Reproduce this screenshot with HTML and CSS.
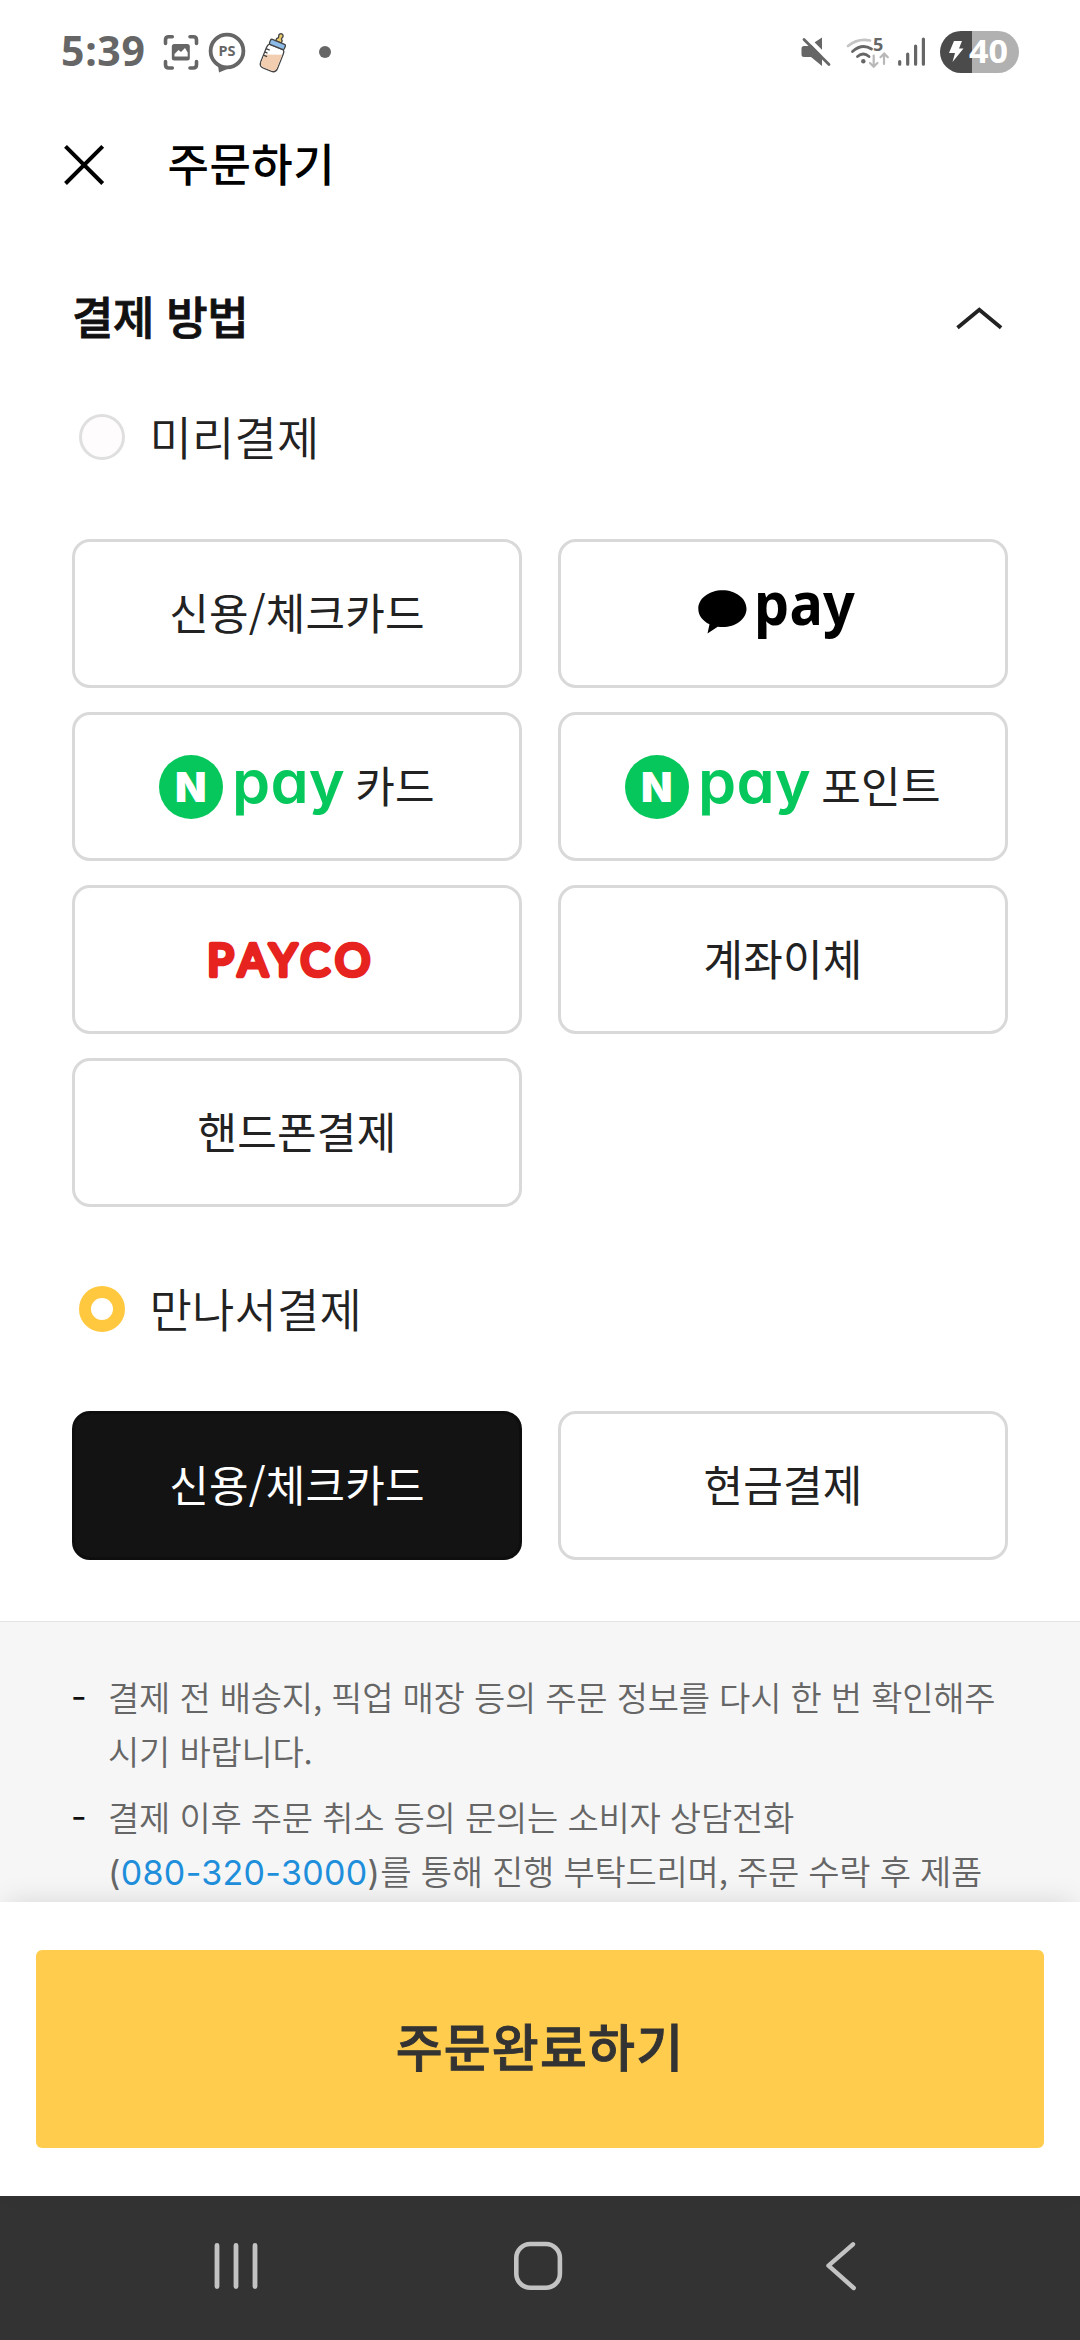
FILE: index.html
```
<!DOCTYPE html>
<html lang="ko">
<head>
<meta charset="utf-8">
<title>주문하기</title>
<link rel="stylesheet" href="styles.css">
</head>
<body>
<div class="screen">
  <div class="statusbar">
    <div class="status-left">
      <span class="clock">5:39</span>
      <svg class="ic-capture" width="36" height="42" viewBox="162.500 31 36 42" fill="none" stroke="#666" stroke-width="3.600" stroke-linecap="round">
        <path d="M165 43.500V40q0-3.200 3.200-3.200h3.600M189.500 36.800h3.300q3.200 0 3.200 3.200v3.500M165 61.500v3.300q0 3.200 3.200 3.200h3.600M189.500 68h3.300q3.200 0 3.200-3.200v-3.300"/>
        <rect x="171.300" y="44" width="18" height="16.500" rx="2.500" fill="#666" stroke="none"/>
        <path d="M174 56.500v-2.500l4-4 2.500 2 4-4 2.700 4.500v4z" fill="#fff" stroke="none"/>
      </svg>
      <svg class="ic-bubble" width="40" height="42" viewBox="207 31 40 42">
        <path d="M217.500 62 219 72.500 232 67z" fill="#666"/>
        <circle cx="227" cy="51" r="16.400" fill="#fff" stroke="#666" stroke-width="3.800"/>
        <text x="218.400" y="56.200" class="ps" textLength="17" lengthAdjust="spacingAndGlyphs">PS</text>
      </svg>
      <svg class="ic-bottle" width="34" height="42" viewBox="257 31 34 42" stroke="#444" stroke-width="1.300" stroke-linejoin="round">
        <g transform="rotate(22 274 53)">
          <path d="M271 41v-2.500q2-1 1-3a2.200 2.200 0 1 1 4 0q-1 2 1 3V41z" fill="#e8c86a"/>
          <path d="M266.500 46.500q-1.500 1.500-1.500 4V66q0 5 5 5h8q5 0 5-5V50.500q0-2.500-1.500-4z" fill="#fff"/>
          <path d="M265.700 58l16.600-6.500V66q0 4.300-4.300 4.300h-8q-4.300 0-4.300-4.300z" fill="#f2cdb0" stroke="none"/>
          <rect x="266" y="41" width="16" height="5.500" rx="1.500" fill="#8dbbe8"/>
          <path d="M265 52h4M265 55.500h3M265 59h4" fill="none"/>
        </g>
      </svg>
      <span class="dot"></span>
    </div>
    <div class="status-right">
      <svg class="ic-mute" width="34" height="42" viewBox="799 31 34 42">
        <path d="M804 46h5l13-8.500V66L811 57h-7q-2.500 0-2.500-2.500v-6q0-2.500 2.500-2.500z" fill="#666"/>
        <path d="M806 36.500l26 26.500" stroke="#fff" stroke-width="4"/>
        <path d="M804 39.500l25 25" stroke="#666" stroke-width="2.800" stroke-linecap="round"/>
      </svg>
      <svg class="ic-wifi" width="43" height="42" viewBox="846 31 43 42" fill="none" stroke-linecap="round" stroke-width="2.800">
        <path d="M848 46q10-8 22-5.500" stroke="#c4c4c4"/>
        <path d="M852.500 51.500q9.500-8.500 19-2.500M857.500 56.500q5.800-5 11.500 0" stroke="#666"/>
        <circle cx="863.300" cy="61.300" r="2.200" fill="#666"/>
        <path d="M873.700 55.500v11M870 63l3.700 3.700 3.700-3.700M884 64V54M880.500 57.200l3.700-3.700 3.600 3.700" stroke="#b8b8b8" stroke-width="2.200"/>
        <text x="873" y="51.200" class="wifi5">5</text>
      </svg>
      <svg class="ic-signal" width="28" height="42" viewBox="898 31 28 42" stroke="#666" stroke-width="3.200" stroke-linecap="round">
        <path d="M899.700 61.500v2.700M907.700 54v10.200M915.600 46v18.200M923.400 39v25.200"/>
      </svg>
      <svg class="ic-battery" width="79" height="42" viewBox="940 31 79 42">
        <path d="M972 31h26a21 21 0 0 1 0 42h-26z" fill="#b1b1b1"/>
        <path d="M972 31h-11a21 21 0 0 0 0 42h11z" fill="#4b4b4b"/>
        <path d="M954 41h8l-3 7.500h4.500L952.500 62l2.500-9h-6z" fill="#fff"/>
        <text x="969" y="62.500" class="batt" textLength="39" lengthAdjust="spacingAndGlyphs">40</text>
      </svg>
    </div>
  </div>

  <header class="appbar">
    <svg width="40" height="40" viewBox="64 145 40 40" stroke="#000" stroke-width="4"><path d="M65.500 146.300l37.200 37.200M102.700 146.300l-37.200 37.200"/></svg>
    <h1>주문하기</h1>
  </header>

  <section class="payment">
    <div class="section-head">
      <h2>결제 방법</h2>
      <svg width="50" height="24" viewBox="954 305 50 24" fill="none" stroke="#222" stroke-width="3.800"><path d="M957.500 326.800l21.800-18 21.800 18"/></svg>
    </div>

    <label class="radio"><span class="ring"></span><span class="radio-text">미리결제</span></label>
    <div class="grid prepaid">
      <button class="opt">신용/체크카드</button>
      <button class="opt">
        <svg class="kakao" width="160" height="52" viewBox="698 588 160 52">
          <path d="M722.500 590.300c13.300 0 24 8.200 24 18.400s-10.700 18.400-24 18.400q-2.500 0-4.800-.4L707.500 633.500l2-9.300c-7-3.300-11.200-9-11.200-15.500 0-10.200 10.900-18.400 24.200-18.400z"/>
          <text x="754" y="624.500" class="kakao-text" textLength="101" lengthAdjust="spacingAndGlyphs">pay</text>
        </svg>
      </button>
      <button class="opt npay">
        <svg width="186" height="64" viewBox="159 755 186 64"><circle cx="191" cy="787" r="32" fill="#06c75b"/><text x="191" y="802" class="n">N</text><text x="232" y="802.500" class="n-pay" textLength="113" lengthAdjust="spacingAndGlyphs">pay</text></svg>
        <span>카드</span>
      </button>
      <button class="opt npay">
        <svg width="186" height="64" viewBox="159 755 186 64"><circle cx="191" cy="787" r="32" fill="#06c75b"/><text x="191" y="802" class="n">N</text><text x="232" y="802.500" class="n-pay" textLength="113" lengthAdjust="spacingAndGlyphs">pay</text></svg>
        <span>포인트</span>
      </button>
      <button class="opt"><svg class="payco" width="170" height="46" viewBox="206 937 170 46"><text y="975.800" x="207.300 238 269.500 300.500 335">PAYCO</text></svg></button>
      <button class="opt">계좌이체</button>
      <button class="opt">핸드폰결제</button>
    </div>

    <label class="radio"><span class="ring on"></span><span class="radio-text">만나서결제</span></label>
    <div class="grid">
      <button class="opt selected">신용/체크카드</button>
      <button class="opt">현금결제</button>
    </div>
  </section>

  <ul class="notes">
    <li>결제 전 배송지, 픽업 매장 등의 주문 정보를 다시 한 번 확인해주<br>시기 바랍니다.</li>
    <li>결제 이후 주문 취소 등의 문의는 소비자 상담전화<br><span class="num">(<a>080-320-3000</a>)</span>를 통해 진행 부탁드리며, 주문 수락 후 제품</li>
  </ul>

  <div class="cta-bar"><button class="cta">주문완료하기</button></div>

  <nav class="navbar">
    <svg width="46" height="50" viewBox="213 2241 46 50" stroke="#c3c3c3" stroke-width="4.800" stroke-linecap="round"><path d="M217 2245.500v41M236 2245.500v41M255 2245.500v41"/></svg>
    <svg width="50" height="50" viewBox="513 2241 50 50"><rect x="516.300" y="2244" width="43.600" height="43.800" rx="14" fill="none" stroke="#c3c3c3" stroke-width="4.600"/></svg>
    <svg width="34" height="50" viewBox="824 2241 34 50" fill="none" stroke="#c3c3c3" stroke-width="4.400" stroke-linecap="round" stroke-linejoin="round"><path d="M853 2244.300l-24.500 21.400 25.200 22.300"/></svg>
  </nav>
</div>
</body>
</html>
```
FILE: styles.css
```
* { box-sizing: border-box; margin: 0; padding: 0; }
body { background: #fff; font-family: "Noto Sans CJK KR", sans-serif; color: #222; }
button { font: inherit; color: inherit; border: 0; background: none; }
svg { display: block; flex: none; overflow: visible; }

.screen { display: flex; flex-direction: column; width: 1080px; height: 2340px; overflow: hidden; }

.statusbar { display: flex; justify-content: space-between; height: 104px; padding: 0 61px; }
.status-left, .status-right { display: flex; align-items: center; }
.clock { width: 101.500px; padding-bottom: 3px; font: 700 41px/1.362 "Noto Sans", sans-serif; letter-spacing: .7px; color: #666; }
.ic-bubble { margin-left: 8.500px; }
.ic-bottle { margin-left: 10px; }
.dot { width: 12px; height: 12px; margin-left: 28px; border-radius: 50%; background: #666; }
.ps { font: 700 15px "Noto Sans", sans-serif; fill: #666; }
.ic-wifi { margin-left: 13px; }
.ic-signal { margin-left: 9px; }
.ic-battery { margin-left: 14px; }
.wifi5 { font: 700 18px "Noto Sans", sans-serif; fill: #666; }
.batt { font: 700 32px "Noto Sans", sans-serif; fill: #fff; }

.appbar { display: flex; align-items: center; height: 122px; padding: 0 64px; gap: 63.500px; color: #000; }
.appbar h1 { padding-bottom: 6px; font-size: 45px; font-weight: 500; letter-spacing: .5px; }

.payment { height: 1394.500px; padding: 50px 72px 0; }
.section-head { display: flex; align-items: center; justify-content: space-between; height: 84px; padding-right: 4px; color: #111; }
.section-head h2 { padding-bottom: 6px; font-size: 45px; font-weight: 500; letter-spacing: -.4px; -webkit-text-stroke: .8px #111; }

.radio { display: flex; align-items: center; height: 46px; margin-top: 54px; padding-left: 7px; }
.ring { width: 46px; height: 46px; border: 3px solid #dfdfdf; border-radius: 50%; background: #fefcfd; }
.ring.on { border: 12px solid #ffc83e; background: #fff; }
.radio-text { margin-left: 24.500px; padding-bottom: 4px; font-size: 46px; font-weight: 350; letter-spacing: .2px; }

.grid { display: grid; grid-template-columns: 450px 450px; grid-auto-rows: 149px; gap: 24.100px 36px; margin-top: 79px; }
.prepaid { margin-bottom: 79px; }
.opt { display: flex; align-items: center; justify-content: center; padding-bottom: 5px; border: 3px solid #d9d9d9; border-radius: 18px; font-size: 43px; letter-spacing: .2px; }
.opt.selected { border-color: #0e0e0e; background: #131313; color: #fff; }
.npay { gap: 10px; }
.npay svg { margin-top: 5px; }
.kakao { margin: 5px 10px 0 0; }
.kakao-text { font: 700 59px "Noto Sans", sans-serif; }
.n { font: 900 41px Inter, sans-serif; fill: #fff; text-anchor: middle; }
.n-pay { font: 600 59px Inter, sans-serif; font-feature-settings: "cv11"; fill: #06c75b; }
.payco { margin: 5px 12px 0 0; }
.payco text { font: 400 44px Lato, sans-serif; fill: #e6231e; stroke: #e6231e; stroke-width: 4.600px; stroke-linejoin: round; }

.notes { flex: 1; overflow: hidden; padding: 48px 72px 0; border-top: 1px solid #e5e5e5; background: #f6f6f6; list-style: none; color: #666; font-size: 34px; font-weight: 350; line-height: 54px; letter-spacing: -.23px; }
.notes li { padding-left: 36px; margin-bottom: 12px; white-space: nowrap; }
.notes li::before { content: "-"; float: left; width: 36px; margin-left: -37px; font-family: Inter, sans-serif; font-weight: 400; color: #111; }
.num { font-family: Inter, sans-serif; font-weight: 400; letter-spacing: .32px; }
.num a { color: #1f8fdc; }

.cta-bar { position: relative; height: 294px; padding: 48px 36px; background: #fff; box-shadow: 0 -6px 26px -6px rgba(0, 0, 0, .13); }
.cta { display: flex; align-items: center; justify-content: center; width: 100%; height: 198px; padding-bottom: 8px; border-radius: 6px; background: #ffcc4e; color: #333; font-size: 51px; font-weight: 500; letter-spacing: 1.200px; -webkit-text-stroke: .9px #333; }

.navbar { display: flex; align-items: center; justify-content: space-between; height: 144px; padding: 0 222px 4px 213px; background: #333; }
.navbar svg:nth-child(2) { margin-right: 7px; }
```
